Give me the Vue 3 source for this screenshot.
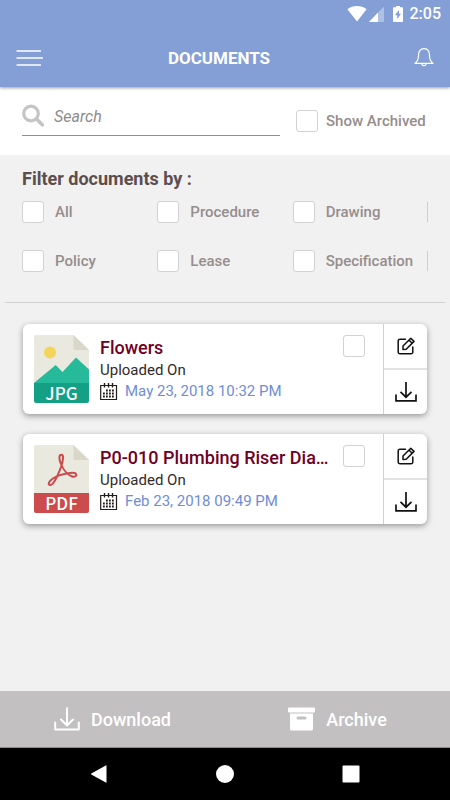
<script setup>
import { ref } from 'vue'

const query = ref('')
const showArchived = ref(false)
const filters = ref([
  { name: 'All', on: false },
  { name: 'Procedure', on: false },
  { name: 'Drawing', on: false },
  { name: 'Policy', on: false },
  { name: 'Lease', on: false },
  { name: 'Specification', on: false }
])
const documents = ref([
  { id: 1, title: 'Flowers', date: 'May 23, 2018 10:32 PM', type: 'JPG', selected: false },
  { id: 2, title: 'P0-010 Plumbing Riser Dia…', date: 'Feb 23, 2018 09:49 PM', type: 'PDF', selected: false }
])
const dots = [
  [7, 8], [10, 8], [13, 8],
  [4, 11], [7, 11], [10, 11], [13, 11],
  [4, 14], [7, 14], [10, 14], [13, 14]
]
</script>

<template>
  <div class="screen">
    <header class="header">
      <div class="status">
        <svg width="57" height="18" viewBox="0 0 57 18" fill="#fff">
          <path d="M0.4 4.2C5.8 0 14.200 0 19.600 4.200L10 16.500Z" />
          <path d="M37 1.500V17H22Z" opacity=".35" />
          <path d="M31 7.500V17H22Z" />
          <path fill-rule="evenodd" d="M49 1h4v1.200h2.200a.8.8 0 0 1 .8.8v13.200a.8.8 0 0 1-.8.8h-8.400a.8.8 0 0 1-.8-.8V3a.8.8 0 0 1 .8-.8H49ZM52 5L48 10.300h2.200v4L54 8.800h-2Z" />
        </svg>
        <span class="clock">2:05</span>
      </div>
      <div class="titlebar">
        <button class="menu" aria-label="Menu">
          <svg width="28" height="18" viewBox="0 0 28 18" fill="none" stroke="#fff" stroke-width="1.300" stroke-linecap="round">
            <path d="M1 2H24.500M1 9H26.500M1 16H24.500" />
          </svg>
        </button>
        <h1>DOCUMENTS</h1>
        <button class="bell" aria-label="Notifications">
          <svg width="20" height="20" viewBox="0 0 20 20" fill="none" stroke="#fff" stroke-width="1.200" stroke-linejoin="round">
            <path d="M1 15.300C3.600 13.500 4.500 11.500 4.500 7.500C4.500 3 6.500 .6 10 .6S15.500 3 15.500 7.500C15.500 11.500 16.400 13.500 19 15.300Z" />
            <path d="M7.800 15.500a2.200 2.200 0 0 0 4.400 0" />
          </svg>
        </button>
      </div>
    </header>

    <section class="search-row">
      <label class="search">
        <svg width="22" height="23" viewBox="0 0 22 23" fill="none" stroke="#c4c4c4">
          <circle cx="9" cy="9.500" r="7.300" stroke-width="3.200" />
          <path d="M14.500 15L20.300 20.800" stroke-width="3.600" stroke-linecap="round" />
        </svg>
        <input v-model="query" type="text" placeholder="Search" aria-label="Search">
      </label>
      <label class="check archived">
        <input v-model="showArchived" type="checkbox">
        <span>Show Archived</span>
      </label>
    </section>

    <main class="content">
      <section class="filters">
        <h2>Filter documents by :</h2>
        <div class="filter-grid">
          <label v-for="filter in filters" :key="filter.name" class="check filter">
            <input v-model="filter.on" type="checkbox">
            <span>{{ filter.name }}</span>
          </label>
        </div>
      </section>

      <section class="documents">
        <article v-for="doc in documents" :key="doc.id" class="card">
          <div class="file" :class="doc.type.toLowerCase()">
            <svg width="55" height="48" viewBox="0 0 55 48">
              <path d="M1.500 0H39.500L55 15V48H0V1.500A1.500 1.500 0 0 1 1.500 0Z" fill="#e9e9e0" />
              <path d="M39.500 0V13.500A1.500 1.500 0 0 0 41 15H55Z" fill="#d9d7ca" />
              <template v-if="doc.type === 'JPG'">
                <circle cx="16" cy="17.500" r="6" fill="#f3d55b" />
                <path d="M0 48L21.700 30L28.500 37L42 22.500L55 34.500V48Z" fill="#26b99a" />
              </template>
              <path
                v-else
                d="M27.300 9.800C24.800 9.800 24.800 14 27 19C28.800 23.500 33 29.500 37.500 31.200C40.500 32.300 42.700 31.300 42.300 29.500C41.900 27.800 38.500 27.500 34 28.200C28.500 29 22 31.200 18.200 34C14.800 36.500 13.800 39.200 15.700 40C17.700 40.800 20.500 37 23.300 31C26.300 24.500 28.800 17 29.100 13C29.300 10.800 28.500 9.800 27.300 9.800Z"
                fill="none"
                stroke="#cc4b4c"
                stroke-width="2"
                stroke-linejoin="round"
              />
            </svg>
            <span>{{ doc.type }}</span>
          </div>
          <div class="info">
            <h3>{{ doc.title }}</h3>
            <p>Uploaded On</p>
            <p class="date">
              <svg width="18" height="18" viewBox="0 0 18 18" fill="none" stroke="#231a1a">
                <path d="M.7 2.500H16.500V16.500H.7Z" stroke-width="1.200" />
                <path d="M4.500 0V4.500M8.500 0V4.500M12.500 0V4.500" stroke-width="1.400" />
                <path v-for="([x, y], i) in dots" :key="i" :d="`M${x - 1} ${y - 0.5}h1.800`" stroke-width="1.800" />
              </svg>
              <time>{{ doc.date }}</time>
            </p>
          </div>
          <input v-model="doc.selected" class="select" type="checkbox" :aria-label="`Select ${doc.title}`">
          <div class="actions">
            <button :aria-label="`Edit ${doc.title}`">
              <svg width="18" height="18" viewBox="0 0 18 18" fill="none" stroke="#111" stroke-width="1.500" stroke-linejoin="round" stroke-linecap="round">
                <path d="M8.500 2.200H3A1.800 1.800 0 0 0 1.200 4V15A1.800 1.800 0 0 0 3 16.800H14A1.800 1.800 0 0 0 15.800 15V10" />
                <path d="M6 9L13.800 1.200L17 4.400L9.200 12.200L6 12.500ZM12 3L15.200 6.200" />
              </svg>
            </button>
            <button :aria-label="`Download ${doc.title}`">
              <svg width="22" height="20" viewBox="0 0 22 20" fill="none" stroke="#111" stroke-width="1.700">
                <path d="M11 0V15M5.500 9.800L11 15.200L16.500 9.800M1 12.500V18.800H21V12.500" />
              </svg>
            </button>
          </div>
        </article>
      </section>
    </main>

    <footer class="toolbar">
      <button>
        <svg width="26" height="24" viewBox="0 0 26 24" fill="none" stroke="#fff" stroke-width="2" stroke-linecap="round" stroke-linejoin="round">
          <path d="M13 1.200V18M7 12.500L13 18.500L19 12.500M1.200 15.500V22.500H24.800V15.500" />
        </svg>
        Download
      </button>
      <button>
        <svg width="27" height="24" viewBox="0 0 27 24" fill="#fff">
          <rect y="0.500" width="27" height="5" rx="1" />
          <path fill-rule="evenodd" d="M2 6.500H25V22A1.500 1.500 0 0 1 23.500 23.500H3.500A1.500 1.500 0 0 1 2 22ZM10 9.500a1.500 1.500 0 0 0 0 3H17a1.500 1.500 0 0 0 0-3Z" />
        </svg>
        Archive
      </button>
    </footer>

    <nav class="system">
      <button aria-label="Back">
        <svg width="18" height="18" viewBox="0 0 18 18" fill="#fff"><path d="M16.500 0.600V17.400Q16.500 18 15.800 17.600L1.300 9.500Q.7 9 1.300 8.500L15.800.4Q16.500 0 16.500.6Z" /></svg>
      </button>
      <button aria-label="Home">
        <svg width="18" height="18" viewBox="0 0 18 18" fill="#fff"><circle cx="9" cy="9" r="9" /></svg>
      </button>
      <button aria-label="Recent apps">
        <svg width="18" height="18" viewBox="0 0 18 18" fill="#fff"><rect x="0.500" y="0.500" width="17" height="17" rx="1" /></svg>
      </button>
    </nav>
  </div>
</template>

<style>
body {
  margin: 0;
}
</style>

<style scoped>
.screen {
  display: flex;
  flex-direction: column;
  min-height: 100vh;
  background: #f1f1f1;
  color: #968d8d;
  font-family: Roboto, "Liberation Sans", sans-serif;
}

.screen * {
  box-sizing: border-box;
}

h1, h2, h3, p {
  margin: 0;
  font-weight: 500;
}

svg {
  display: block;
  flex: none;
}

button {
  display: flex;
  align-items: center;
  justify-content: center;
  margin: 0;
  padding: 0;
  border: 0;
  background: none;
  font: inherit;
  color: inherit;
}

.header {
  position: relative;
  background: #849ed6;
  color: #fff;
  box-shadow: 0 1px 3px rgba(0, 0, 0, 0.4);
}

.status {
  display: flex;
  align-items: center;
  justify-content: flex-end;
  gap: 6px;
  height: 28px;
  padding-right: 9px;
}

.clock {
  font-size: 16px;
  font-weight: 500;
  line-height: 28px;
}

.titlebar {
  display: flex;
  align-items: center;
  justify-content: space-between;
  height: 59px;
  padding: 0 16px;
}

.menu,
.bell {
  height: 28px;
}

.bell {
  justify-content: flex-end;
  width: 40px;
}

h1 {
  font-size: 17px;
  font-weight: 700;
  line-height: 24px;
}

.search-row {
  display: flex;
  align-items: flex-start;
  gap: 16px;
  height: 68px;
  padding: 17px 22px 0;
  background: #fff;
}

.search {
  display: flex;
  flex: 1;
  gap: 10px;
  min-width: 0;
  height: 32px;
  border-bottom: 1px solid #968d8d;
}

.search input {
  flex: 1;
  min-width: 0;
  height: 24px;
  padding: 0;
  border: 0;
  outline: 0;
  background: none;
  color: #555;
  font: italic 16px Roboto, "Liberation Sans", sans-serif;
}

.search input::placeholder {
  color: #8c8c8c;
  opacity: 1;
}

.check {
  display: flex;
  align-items: center;
  gap: 11px;
  font-size: 15px;
  font-weight: 500;
  line-height: 24px;
  white-space: nowrap;
}

.archived {
  gap: 8px;
  min-width: 132px;
  padding-top: 5px;
}

input[type="checkbox"] {
  appearance: none;
  flex: none;
  width: 22px;
  height: 22px;
  margin: 0;
  border: 1px solid #d3d1d1;
  border-radius: 3px;
  background: #fff;
}

input[type="checkbox"]:checked {
  background: #849ed6;
}

.content {
  flex: 1;
}

.filters {
  margin: 0 5px;
  padding: 12px 17px 29px;
  border-bottom: 1px solid #d2d0d0;
}

h2 {
  color: #5c4e4e;
  font-size: 18px;
  font-weight: 700;
  line-height: 24px;
}

.filter-grid {
  display: grid;
  grid-template-columns: repeat(3, 1fr);
  row-gap: 25px;
  padding-top: 9px;
}

.filter:nth-child(3n) {
  background: linear-gradient(#cfcdcd, #cfcdcd) right center / 1px 20px no-repeat;
}

.documents {
  display: flex;
  flex-direction: column;
  gap: 20px;
  padding: 21px 23px;
}

.card {
  display: flex;
  min-height: 90px;
  border-radius: 6px;
  background: #fff;
  box-shadow: 0 2px 6px rgba(0, 0, 0, 0.38);
}

.file {
  align-self: flex-start;
  flex: none;
  width: 55px;
  margin: 11px 11px 0;
}

.file span {
  display: block;
  height: 20px;
  border-radius: 0 0 2px 2px;
  color: #fff;
  font: 500 17px/20px "Noto Sans CJK SC", "Noto Sans", sans-serif;
  text-align: center;
}

.jpg span {
  background: #14a085;
}

.pdf span {
  background: #cc4b4c;
}

.info {
  flex: 1;
  min-width: 0;
  padding-top: 12px;
  color: #332a2a;
  font-size: 15px;
  line-height: 21px;
}

h3 {
  overflow: hidden;
  color: #71001f;
  font-size: 18px;
  line-height: 24px;
  text-overflow: ellipsis;
  white-space: nowrap;
}

.info p {
  font-weight: 400;
}

.info .date {
  display: flex;
  align-items: center;
  gap: 7px;
  color: #6f8dd6;
}

.info + .select {
  margin: 11px 18px 0 8px;
}

.actions {
  display: flex;
  flex: none;
  flex-direction: column;
  width: 44px;
  border-left: 1px solid #d0d0d0;
}

.actions button {
  flex: 1;
}

.actions button + button {
  border-top: 2px solid #e2e2e2;
}

.toolbar {
  display: grid;
  grid-template-columns: 1fr 1fr;
  height: 57px;
  border-bottom: 1px solid #8e8d8d;
  background: #c2c0c1;
  color: #fff;
  font-size: 18px;
  font-weight: 500;
}

.toolbar button {
  gap: 11px;
}

.system {
  display: flex;
  align-items: center;
  justify-content: center;
  gap: 108px;
  height: 52px;
  background: #000;
}
</style>
